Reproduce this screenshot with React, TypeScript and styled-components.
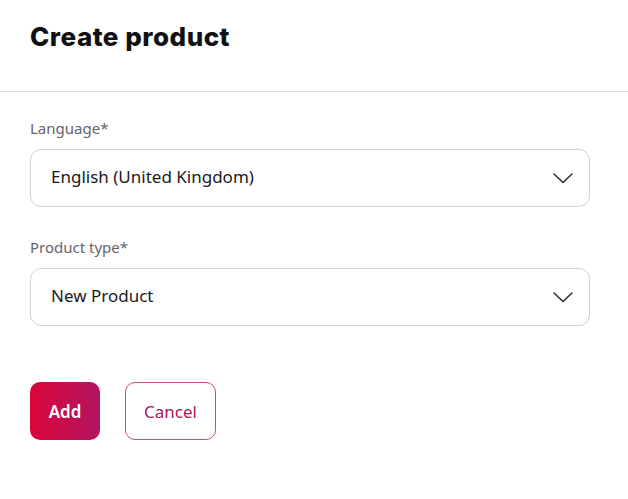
import React from "react";
import styled, { createGlobalStyle } from "styled-components";

const Global = createGlobalStyle`
  html, body { margin: 0; padding: 0; background: #ffffff; }
  body { font-family: "Noto Sans", "Open Sans", sans-serif; }
`;

const Page = styled.div`
  width: 628px;
  min-height: 499px;
  background: #fff;
`;

const Header = styled.header`
  height: 92px;
  box-sizing: border-box;
  border-bottom: 1px solid #dddde3;
  padding: 20px 30px 0;
`;

const Title = styled.h1`
  margin: 0;
  font-family: "Inter", "Roboto", sans-serif;
  font-weight: 800;
  font-size: 26px;
  line-height: 34px;
  color: #111;
  letter-spacing: 0.5px;
`;

const Body = styled.div`
  padding: 24px 38px 0 30px;
  display: flex;
  flex-direction: column;
`;

const Field = styled.div`
  display: flex;
  flex-direction: column;
  margin-bottom: 28px;
`;

const Label = styled.label`
  font-size: 15px;
  line-height: 24px;
  color: #64646e;
  margin-bottom: 9px;
`;

const SelectBox = styled.div`
  height: 58px;
  box-sizing: border-box;
  border: 1px solid #d2d2d6;
  border-radius: 11px;
  display: flex;
  align-items: center;
  justify-content: space-between;
  padding: 0 16px 0 20px;
  font-size: 17px;
  color: #1a1a1a;
`;

const SelectValue = styled.span`
  line-height: 24px;
  margin-bottom: 3px;
`;

const Actions = styled.div`
  display: flex;
  gap: 25px;
  margin-top: 28px;
`;

const PrimaryButton = styled.button`
  height: 58px;
  width: 70px;
  border: none;
  border-radius: 10px;
  background: linear-gradient(90deg, #da0539 0%, #b21661 100%);
  color: #fff;
  font-family: "Noto Sans", sans-serif;
  font-weight: 600;
  font-size: 17px;
  cursor: pointer;
`;

const SecondaryButton = styled.button`
  height: 58px;
  width: 91px;
  box-sizing: border-box;
  border: 1.5px solid #c24f7c;
  border-radius: 10px;
  background: #fff;
  color: #a8175c;
  font-family: "Noto Sans", sans-serif;
  font-weight: 400;
  font-size: 17px;
  cursor: pointer;
`;

const Chevron = () => (
  <svg width="20" height="11" viewBox="0 0 20 11" fill="none">
    <path d="M1 1 L10 9.5 L19 1" stroke="#2a2a2a" strokeWidth="1.5" strokeLinecap="round" strokeLinejoin="round" />
  </svg>
);

export default function App() {
  return (
    <Page>
      <Global />
      <Header>
        <Title>Create product</Title>
      </Header>
      <Body>
        <Field>
          <Label>Language*</Label>
          <SelectBox>
            <SelectValue>English (United Kingdom)</SelectValue>
            <Chevron />
          </SelectBox>
        </Field>
        <Field>
          <Label>Product type*</Label>
          <SelectBox>
            <SelectValue>New Product</SelectValue>
            <Chevron />
          </SelectBox>
        </Field>
        <Actions>
          <PrimaryButton>Add</PrimaryButton>
          <SecondaryButton>Cancel</SecondaryButton>
        </Actions>
      </Body>
    </Page>
  );
}
